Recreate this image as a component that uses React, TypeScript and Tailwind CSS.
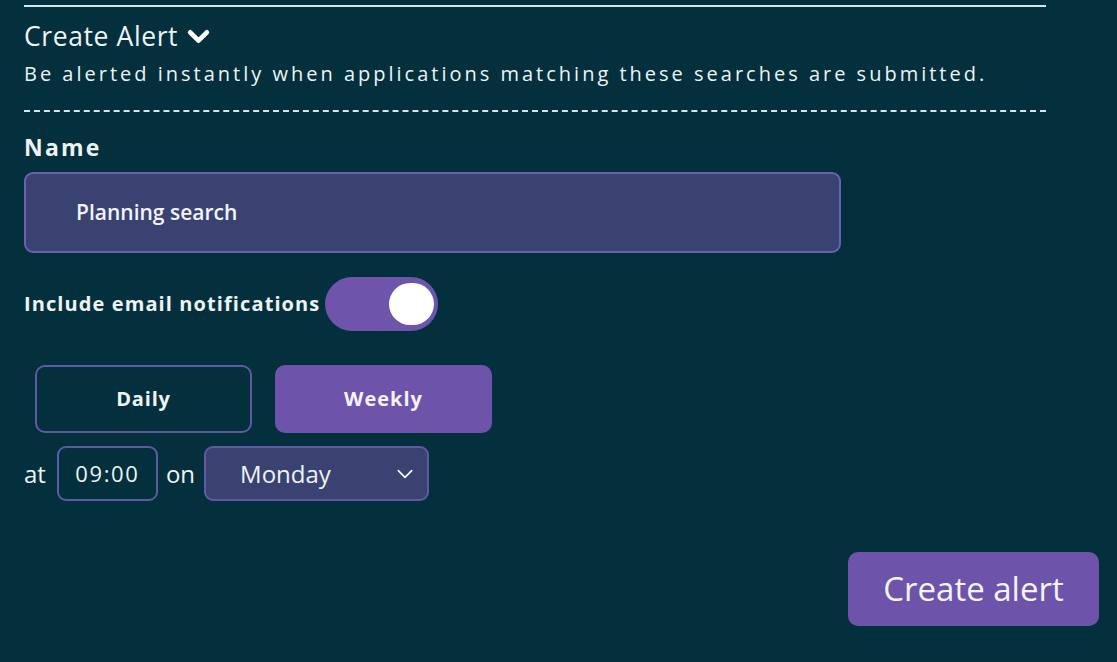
import React from 'react';

const font = { fontFamily: '"Open Sans", "Noto Sans", sans-serif' };

const Chevron = ({ className }: { className?: string }) => (
  <svg viewBox="0 0 24 24" className={className} fill="none" stroke="currentColor" strokeLinecap="round" strokeLinejoin="round">
    <path d="M4 8l8 8 8-8" />
  </svg>
);

const App = () => {
  return (
    <div className="w-[1117px] h-[662px] bg-[#03303c] text-white overflow-hidden" style={font}>
      <div className="pl-6 pr-[71px] pt-[5px]">
        <div className="h-[2px] bg-[#d3e7ea]" />

        <div className="flex items-center gap-[8px] mt-[13px] h-[34px]">
          <span className="text-[26.5px] tracking-[0.6px] text-[#eef4f5]">Create Alert</span>
          <Chevron className="w-[25px] h-[25px] stroke-[4.5] text-white mt-[-2px]" />
        </div>

        <p className="mt-[8px] text-[20px] tracking-[3px] text-[#eef4f5] leading-[24px]">
          Be alerted instantly when applications matching these searches are submitted.
        </p>

        <div className="mt-[24px] border-t-2 border-dashed border-[#d3e7ea]" />

        <div className="mt-[20px] text-[23px] font-bold tracking-[2.2px] leading-[30px] text-[#eef4f5]">Name</div>

        <div className="mt-[10px] w-[817px] h-[81px] rounded-[9px] bg-[#3a4272] border-2 border-[#6a60b2] flex items-center pl-[50px]">
          <span className="text-[21px] font-semibold text-[#f3f3fb]">Planning search</span>
        </div>

        <div className="mt-[24px] flex items-center gap-[5px]">
          <span className="text-[20px] font-bold tracking-[1.1px] text-[#eef4f5]">Include email notifications</span>
          <div className="w-[113px] h-[54px] rounded-full bg-[#6e55ab] flex items-center justify-end pr-[4px]">
            <div className="w-[45px] h-[42px] rounded-full bg-white" />
          </div>
        </div>

        <div className="mt-[34px] ml-[11px] flex gap-[23px]">
          <button className="w-[217px] h-[68px] rounded-[10px] border-2 border-[#5d5aa2] text-[20px] font-bold tracking-[0.8px] text-[#eef4f5]">
            Daily
          </button>
          <button className="w-[217px] h-[68px] rounded-[10px] bg-[#6d54aa] text-[20px] font-bold tracking-[1px] text-[#f3f3fb]">
            Weekly
          </button>
        </div>

        <div className="mt-[13px] flex items-center">
          <span className="text-[24px] text-[#eef4f5]">at</span>
          <div className="ml-[11px] w-[101px] h-[55px] rounded-[9px] border-2 border-[#5d5aa2] flex items-center justify-center text-[22px] tracking-[1.6px] text-[#eef4f5]">
            09:00
          </div>
          <span className="ml-[8px] text-[24px] text-[#eef4f5]">on</span>
          <div className="ml-[9px] w-[225px] h-[55px] rounded-[9px] bg-[#3a4272] border-2 border-[#5d5aa2] flex items-center justify-between pl-[34px] pr-[12px]">
            <span className="text-[24px] text-[#eef4f5]">Monday</span>
            <Chevron className="w-[20px] h-[20px] stroke-[2] text-white" />
          </div>
        </div>

        <div className="mt-[51px] flex justify-end mr-[-53px]">
          <button className="w-[251px] h-[74px] rounded-[10px] bg-[#6d54aa] text-[33px] text-[#f3f3fb]">
            Create alert
          </button>
        </div>
      </div>
    </div>
  );
};

export default App;
